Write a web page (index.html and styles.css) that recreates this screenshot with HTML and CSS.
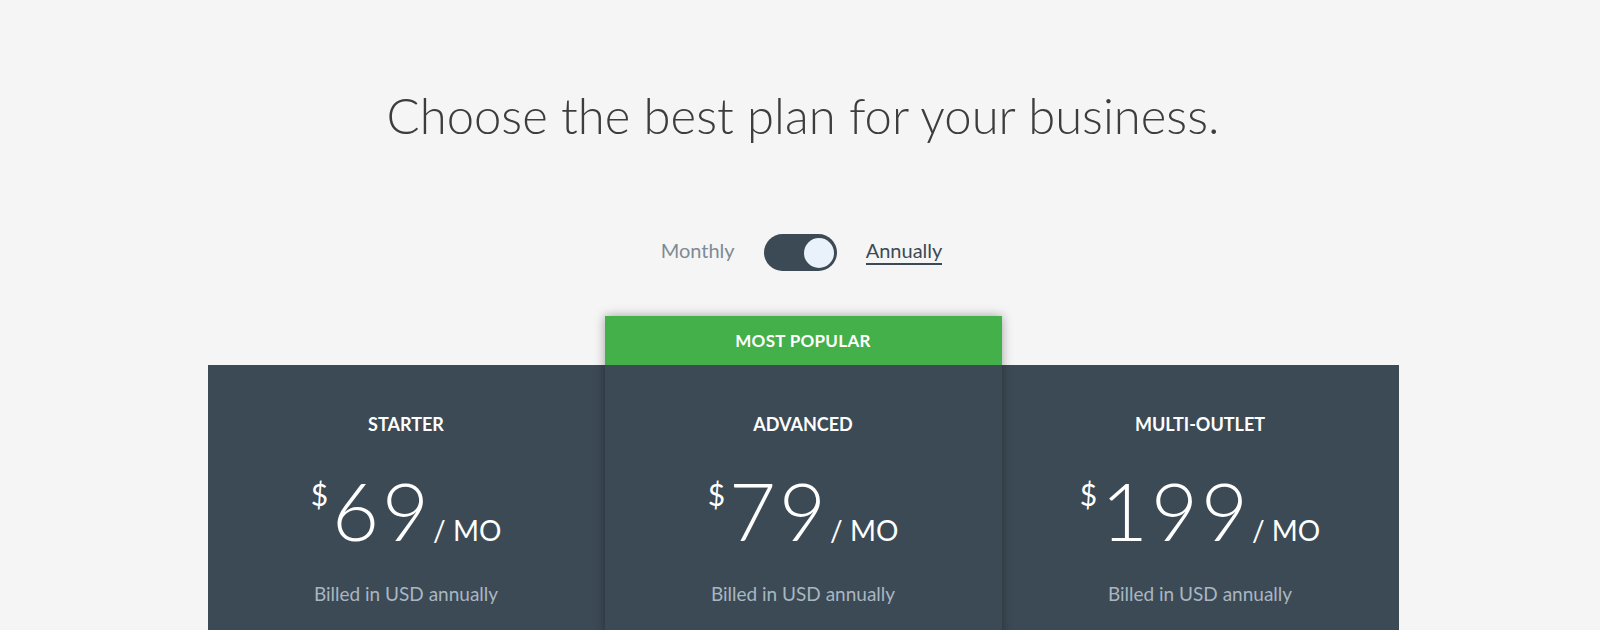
FILE: index.html
```html
<!DOCTYPE html>
<html lang="en">
<head>
  <meta charset="UTF-8" />
  <meta name="viewport" content="width=device-width, initial-scale=1.0"/>
  <title>Pricing - Choose a plan</title>
  <link rel="stylesheet" href="styles.css">
</head>
<body>
  <main class="pricing">
    <h1 class="pricing-title">Choose the best plan for your business.</h1>

    <div class="billing-toggle">
      <span class="toggle-label">Monthly</span>
      <button class="switch is-on" aria-label="Billing period"><span class="knob"></span></button>
      <span class="toggle-label is-active">Annually</span>
    </div>

    <div class="plans">
      <div class="plan">
        <div class="plan-body">
          <h3 class="plan-name">STARTER</h3>
          <div class="price">
            <span class="currency">$</span><span class="amount">69</span><span class="period">/ MO</span>
          </div>
          <p class="billed">Billed in USD annually</p>
        </div>
      </div>

      <div class="plan plan-featured">
        <div class="plan-badge">MOST POPULAR</div>
        <div class="plan-body">
          <h3 class="plan-name">ADVANCED</h3>
          <div class="price">
            <span class="currency">$</span><span class="amount">79</span><span class="period">/ MO</span>
          </div>
          <p class="billed">Billed in USD annually</p>
        </div>
      </div>

      <div class="plan">
        <div class="plan-body">
          <h3 class="plan-name">MULTI-OUTLET</h3>
          <div class="price">
            <span class="currency">$</span><span class="amount">199</span><span class="period">/ MO</span>
          </div>
          <p class="billed">Billed in USD annually</p>
        </div>
      </div>
    </div>
  </main>
</body>
</html>
```

FILE: styles.css
```css
body {
  margin: 0;
  background: #f5f5f5;
  font-family: Lato, "Open Sans", Arial, sans-serif;
  color: #3c4a55;
}
.pricing {
  padding-top: 85px;
  padding-left: 6px;
}
.pricing-title {
  margin: 0;
  text-align: center;
  font-size: 49px;
  line-height: 60px;
  font-weight: 300;
  color: #3d3d3d;
}

/* billing switch */
.billing-toggle {
  display: flex;
  justify-content: center;
  align-items: flex-start;
  gap: 29px;
  margin-top: 89px;
  margin-right: 3px;
  height: 37px;
}
.toggle-label {
  margin-top: 4px;
  font-size: 20px;
  line-height: 24px;
  color: #7d8b96;
}
.toggle-label.is-active {
  color: #3c4a55;
  padding-bottom: 1px;
  border-bottom: 2px solid #3c4a55;
}
.switch {
  display: flex;
  align-items: center;
  justify-content: flex-end;
  width: 73px;
  height: 37px;
  padding: 0 3px;
  border: none;
  border-radius: 19px;
  background: #3c4a55;
  cursor: pointer;
}
.knob {
  width: 30px;
  height: 30px;
  border-radius: 50%;
  background: #e9f1fa;
}

/* plan cards */
.plans {
  display: grid;
  grid-template-columns: repeat(3, 397px);
  justify-content: center;
  margin-top: 45px;
}
.plan {
  margin-top: 49px;
}
.plan-body {
  height: 420px;
  padding-top: 48px;
  box-sizing: border-box;
  background: #3c4a55;
  text-align: center;
  color: #fff;
}
.plan-featured {
  margin-top: 0;
  position: relative;
  z-index: 1;
  box-shadow: 0 0 10px rgba(0, 0, 0, 0.35);
}
.plan-badge {
  height: 49px;
  line-height: 49px;
  background: #43b04a;
  color: #fff;
  text-align: center;
  font-size: 17px;
  letter-spacing: 0.3px;
  font-weight: 700;
}
.plan-name {
  margin: 0;
  font-size: 18px;
  line-height: 22px;
  font-weight: 700;
}
.price {
  display: flex;
  justify-content: center;
  align-items: baseline;
  margin-top: 34px;
}
.currency {
  align-self: flex-start;
  font-size: 30px;
  line-height: 30px;
  margin-top: 10px;
  margin-right: 4px;
}
.amount {
  font-size: 81px;
  line-height: 81px;
  font-weight: 300;
  letter-spacing: 3px;
}
.period {
  font-size: 28px;
  margin-left: 1px;
}
.billed {
  margin: 32px 0 0;
  font-size: 19px;
  line-height: 24px;
  color: #a9b6c1;
}
```
